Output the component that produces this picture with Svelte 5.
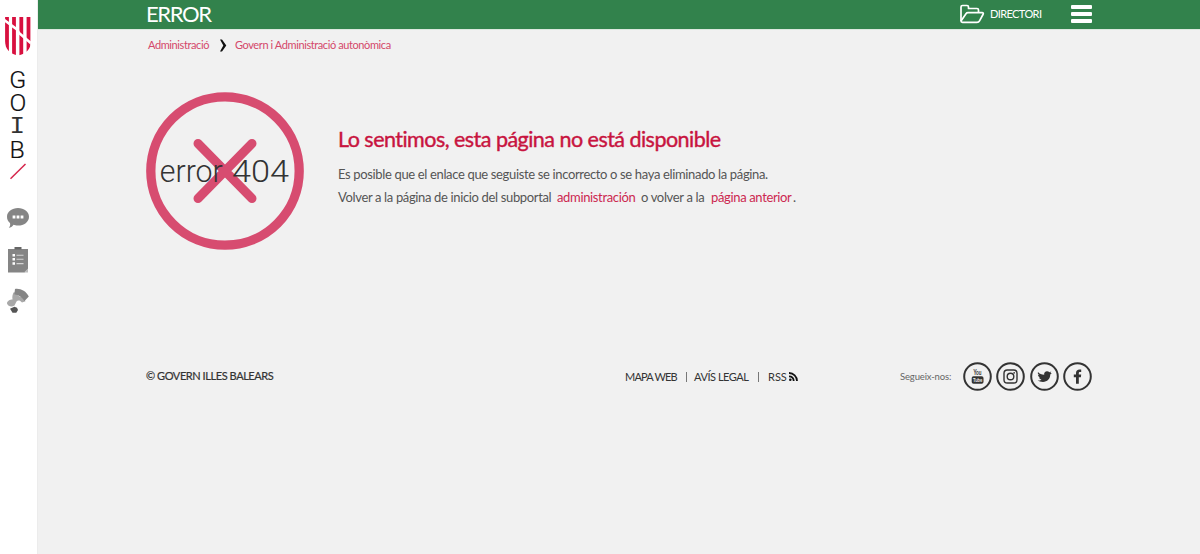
<script>
  const letters = ['G', 'O', 'I', 'B'];
</script>

<div class="page">
  <aside class="rail">
    <svg class="shield" width="26" height="39" viewBox="0 0 26 39">
      <defs><clipPath id="sh"><path d="M0 0H26V24C26 32 21 37 13 38.5C5 37 0 32 0 24Z" /></clipPath></defs>
      <g clip-path="url(#sh)">
        <path d="M2 0V39M9 0V39M16.300 0V39M23.500 0V39" stroke="#d8103f" stroke-width="3.800" />
        <path d="M-2 2L12 12.500L14 16L28 28" stroke="#fff" stroke-width="2.600" fill="none" />
      </g>
    </svg>
    <div class="goib">
      {#each letters as l}<span class:serif={l === 'I'}>{l}</span>{/each}
    </div>
    <svg class="slash" width="18" height="17" viewBox="0 0 18 17"><path d="M1.500 15.800L16.500 1" stroke="#d5254b" stroke-width="1.500" /></svg>
    <svg class="chat" width="24" height="22" viewBox="0 0 24 22">
      <path d="M12 1C18 1 23 4.600 23 9.700C23 15 18 18.500 12 18.500C10 18.500 8.700 18.200 7.500 17.800C6.400 19.700 4.500 20.700 2.800 20.800C4 19.600 4.500 18 4 16C2 14.500 1 12.400 1 9.700C1 4.600 6 1 12 1Z" fill="#858585" />
      <path d="M6.600 8.600h2.800v2.800h-2.800zM10.600 8.600h2.800v2.800h-2.800zM14.600 8.600h2.800v2.800h-2.800z" fill="#fff" />
    </svg>
    <svg class="clip" width="20" height="26" viewBox="0 0 20 26">
      <path d="M0 2H20V22L16.500 25.500H0Z" fill="#858585" />
      <path d="M20 21.500L16 25.500H20Z" fill="#bbb" />
      <path d="M6.500 0H13.500V2.500H6.500Z" fill="#666" />
      <path d="M4.500 7h2.500v2.500h-2.500zM4.500 11h2.500v2.500h-2.500zM4.500 15.300h2.500v2.500h-2.500z" fill="#fff" />
      <path d="M8.500 8.300H15.500M8.500 12.300H15.500M8.500 16.600H15.500" stroke="#d5d5d5" stroke-width="1.100" />
    </svg>
    <svg class="fan" width="24" height="26" viewBox="0 0 24 26">
      <path d="M8 4C10 5.500 12 7.800 13.500 8.500C16.500 9 18.500 10.500 19.500 13.300L16 14.500C14 11.800 11.500 12 10.500 13.500L8.500 17.500C5.500 19.500 2 18.200 1 15.500C1 13 4 11.500 6.500 11.500C6 8.500 6.500 6 8 4Z" fill="#a8a8a8" />
      <path d="M9 1C14.500 .2 20 3 22.800 8.500L18.500 13C16.500 9.800 13.500 7.500 8.300 6.300Z" fill="#858585" />
      <path d="M4 20.800L8.400 18.700L11 19.800L12 22L10.300 24.800H6.500Z" fill="#555" />
    </svg>
  </aside>

  <div class="main">
    <header>
      <div class="title">ERROR</div>
      <svg class="folder" width="26" height="20" viewBox="0 0 26 20" fill="none" stroke="#fff" stroke-width="1.700" stroke-linejoin="round">
        <path d="M2 17V3Q2 1.500 3.500 1.500H8Q9.500 1.500 9.500 3V4.500H18Q19.500 4.500 19.500 6V8.500" />
        <path d="M2 17L7 9.700Q7.700 8.700 9 8.700H23Q25 8.700 24 10.500L20.500 16.800Q19.700 18.300 18 18.300H3.500Q2 18.300 2 17Z" />
      </svg>
      <span class="dir">DIRECTORI</span>
      <div class="burger"><i></i><i></i><i></i></div>
    </header>

    <nav class="crumbs">
      <a class="c1">Administració</a>
      <svg width="8" height="13" viewBox="0 0 8 13"><path d="M1 .5H3L7.300 6.500L3 12.500H1L4.300 6.500Z" fill="#111" /></svg>
      <a class="c2">Govern i Administració autonòmica</a>
    </nav>

    <section class="error">
      <svg width="158" height="158" viewBox="0 0 158 158">
        <circle cx="79" cy="79" r="74.200" fill="none" stroke="#d74c70" stroke-width="9.300" />
        <path d="M52 51.500L106 106.500M106 51.500L52 106.500" stroke="#d74c70" stroke-width="9" stroke-linecap="round" />
        <text x="13.800" y="90" font-size="32" textLength="63" lengthAdjust="spacingAndGlyphs" fill="#333">error</text>
        <text x="86" y="90" font-size="32" textLength="57" lengthAdjust="spacingAndGlyphs" fill="#333">404</text>
      </svg>
      <div class="copy">
        <h1>Lo sentimos, esta página no está disponible</h1>
        <p class="p1">Es posible que el enlace que seguiste se incorrecto o se haya eliminado la página.</p>
        <p class="p2"><span class="s1">Volver a la página de inicio del subportal</span><a class="s2">administración</a><span class="s3">o volver a la</span><a class="s4">página anterior</a><span>.</span></p>
      </div>
    </section>

    <footer>
      <div class="copyright">© GOVERN ILLES BALEARS</div>
      <div class="links">
        <span class="l1">MAPA WEB</span><i></i><span class="l2">AVÍS LEGAL</span><i class="second"></i><span class="l3">RSS</span>
        <svg width="9" height="9" viewBox="0 0 9 9" fill="none" stroke="#111" stroke-width="1.800"><path d="M0 1C4.500 1 8 4.500 8 9M0 4.300C3 4.300 4.700 6 4.700 9" /><circle cx="1.300" cy="7.700" r="1.300" fill="#111" stroke="none" /></svg>
      </div>
      <div class="follow">Segueix-nos:</div>
      <div class="social">
        <svg viewBox="0 0 29 29"><circle cx="14.500" cy="14.500" r="13.300" />
          <text x="10.500" y="13.300" font-size="6.500" textLength="8" lengthAdjust="spacingAndGlyphs" font-weight="700" fill="#333">You</text>
          <rect x="8.700" y="14.300" width="11.800" height="7.400" rx="1.800" fill="#333" />
          <text x="10" y="20.300" font-size="5.500" textLength="9.200" lengthAdjust="spacingAndGlyphs" font-weight="700" fill="#f1f1f1">Tube</text>
        </svg>
        <svg viewBox="0 0 29 29"><circle cx="14.500" cy="14.500" r="13.300" />
          <g fill="none" stroke="#333" stroke-width="1.400"><rect x="8" y="8" width="13" height="13" rx="3.300" /><circle class="thin" cx="14.500" cy="14.500" r="3.300" /></g><rect x="17.300" y="10" width="1.700" height="1.700" rx=".85" fill="#333" />
        </svg>
        <svg viewBox="0 0 29 29"><circle cx="14.500" cy="14.500" r="13.300" />
          <path d="M8 10C9.500 11.800 11.500 12.700 14.200 12.800C13.800 10.500 15.300 9.200 17 9.200C18 9.200 18.800 9.600 19.400 10.200L21.300 9.500L20.400 11.100L21.800 10.900L20.300 12.600C20.300 17 17.200 20 13 20C10.800 20 9 19.500 7.600 18.600C9.300 18.700 10.500 18.200 11.500 17.400C10.200 17.300 9.300 16.500 9 15.500H10.200C8.800 15 8.100 14 8 12.700L9.200 13C8 12.100 7.500 11.300 8 10Z" fill="#333" />
        </svg>
        <svg viewBox="0 0 29 29"><circle cx="14.500" cy="14.500" r="13.300" />
          <path d="M13 21.800V15.300H10.800V12.600H13V11C13 8.700 14.400 7.500 16.500 7.500L18.200 7.600V10H17C16.200 10 15.800 10.400 15.800 11.200V12.600H18.200L17.900 15.300H15.800V21.800Z" fill="#333" />
        </svg>
      </div>
    </footer>
  </div>
</div>

<style>
  :global(body) { margin: 0; background: #f1f1f1; }
  .page { display: flex; height: 554px; overflow: hidden; font-family: Lato, sans-serif; font-weight: 400; color: #333; white-space: nowrap; }
  svg { display: block; flex: none; }
  .rail { width: 38px; flex: none; background: #fff; border-right: 1px solid #ececec; display: flex; flex-direction: column; align-items: center; box-sizing: border-box; padding-right: 2px; }
  .shield { margin-top: 17px; }
  .goib { margin-top: 13px; display: flex; flex-direction: column; align-items: center; font: 300 23px/23.200px Roboto, sans-serif; color: #111; }
  .goib span { transform: scaleX(1.08); -webkit-text-stroke: .2px #111; }
  .goib .serif { font-family: "Liberation Mono", monospace; font-size: 24px; color: #333; -webkit-text-stroke: 0; }
  .slash { margin-top: 1px; }
  .chat { margin-top: 27px; }
  .clip { margin-top: 18px; }
  .fan { margin-top: 15px; }
  .main { flex: 1; min-width: 0; }
  header { height: 30px; background: #32824c; color: #fff; display: flex; align-items: center; padding: 0 0 1px 108px; border-bottom: 1px solid #dce8df; box-sizing: border-box; }
  .title { width: 813px; font-size: 22px; line-height: 28px; letter-spacing: -1.400px; }
  .dir { margin-left: 5px; width: 81px; font-size: 11px; letter-spacing: -.6px; position: relative; top: -1px; }
  .burger { width: 21px; height: 18px; display: flex; flex-direction: column; justify-content: space-between; }
  .burger i { height: 4px; background: #fff; border-radius: 1px; }
  .crumbs { display: flex; align-items: center; height: 28px; padding-left: 110px; font-size: 11px; color: #d4486a; }
  .c1 { width: 71px; letter-spacing: -.4px; }
  .c2 { letter-spacing: -.4px; }
  .crumbs svg { margin-right: 8px; margin-top: 3px; }
  .error { margin: 34px 0 0 108px; display: flex; height: 158px; }
  .error text { font-family: Roboto, sans-serif; font-weight: 300; }
  .copy { margin-left: 34px; }
  h1 { margin: 33px 0 0; font-size: 21.500px; line-height: 28px; font-weight: 400; letter-spacing: -.53px; color: #c8143f; -webkit-text-stroke: .4px #c8143f; }
  p { margin: 0; font-size: 13px; line-height: 23px; color: #555; letter-spacing: -.35px; }
  .p1 { margin-top: 10px; }
  .p2 { display: flex; }
  p a { color: #cc2850; }
  .s1 { width: 219px; }
  .s2 { width: 84px; }
  .s3 { width: 70px; }
  .s4 { width: 82px; }
  footer { margin-top: 112px; padding-left: 108px; height: 29px; display: flex; align-items: center; font-size: 11px; }
  .copyright { width: 479px; letter-spacing: -.43px; -webkit-text-stroke: .2px #333; margin-top: -2px; }
  .links { display: flex; align-items: center; width: 275px; letter-spacing: -.45px; }
  .links i { width: 1px; height: 10px; background: #777; margin-right: 7px; }
  .links i.second { margin-right: 9px; }
  .l1 { width: 61px; letter-spacing: -.8px; }
  .l2 { width: 64px; }
  .l3 { width: 21px; letter-spacing: 0; }
  .follow { width: 63px; font-size: 9.500px; color: #666; letter-spacing: -.15px; }
  .social { display: flex; gap: 4.300px; }
  .social svg { width: 29px; height: 29px; }
  .social circle { fill: none; stroke: #333; stroke-width: 2; }
  .social circle.thin { stroke-width: 1.400; }
</style>
